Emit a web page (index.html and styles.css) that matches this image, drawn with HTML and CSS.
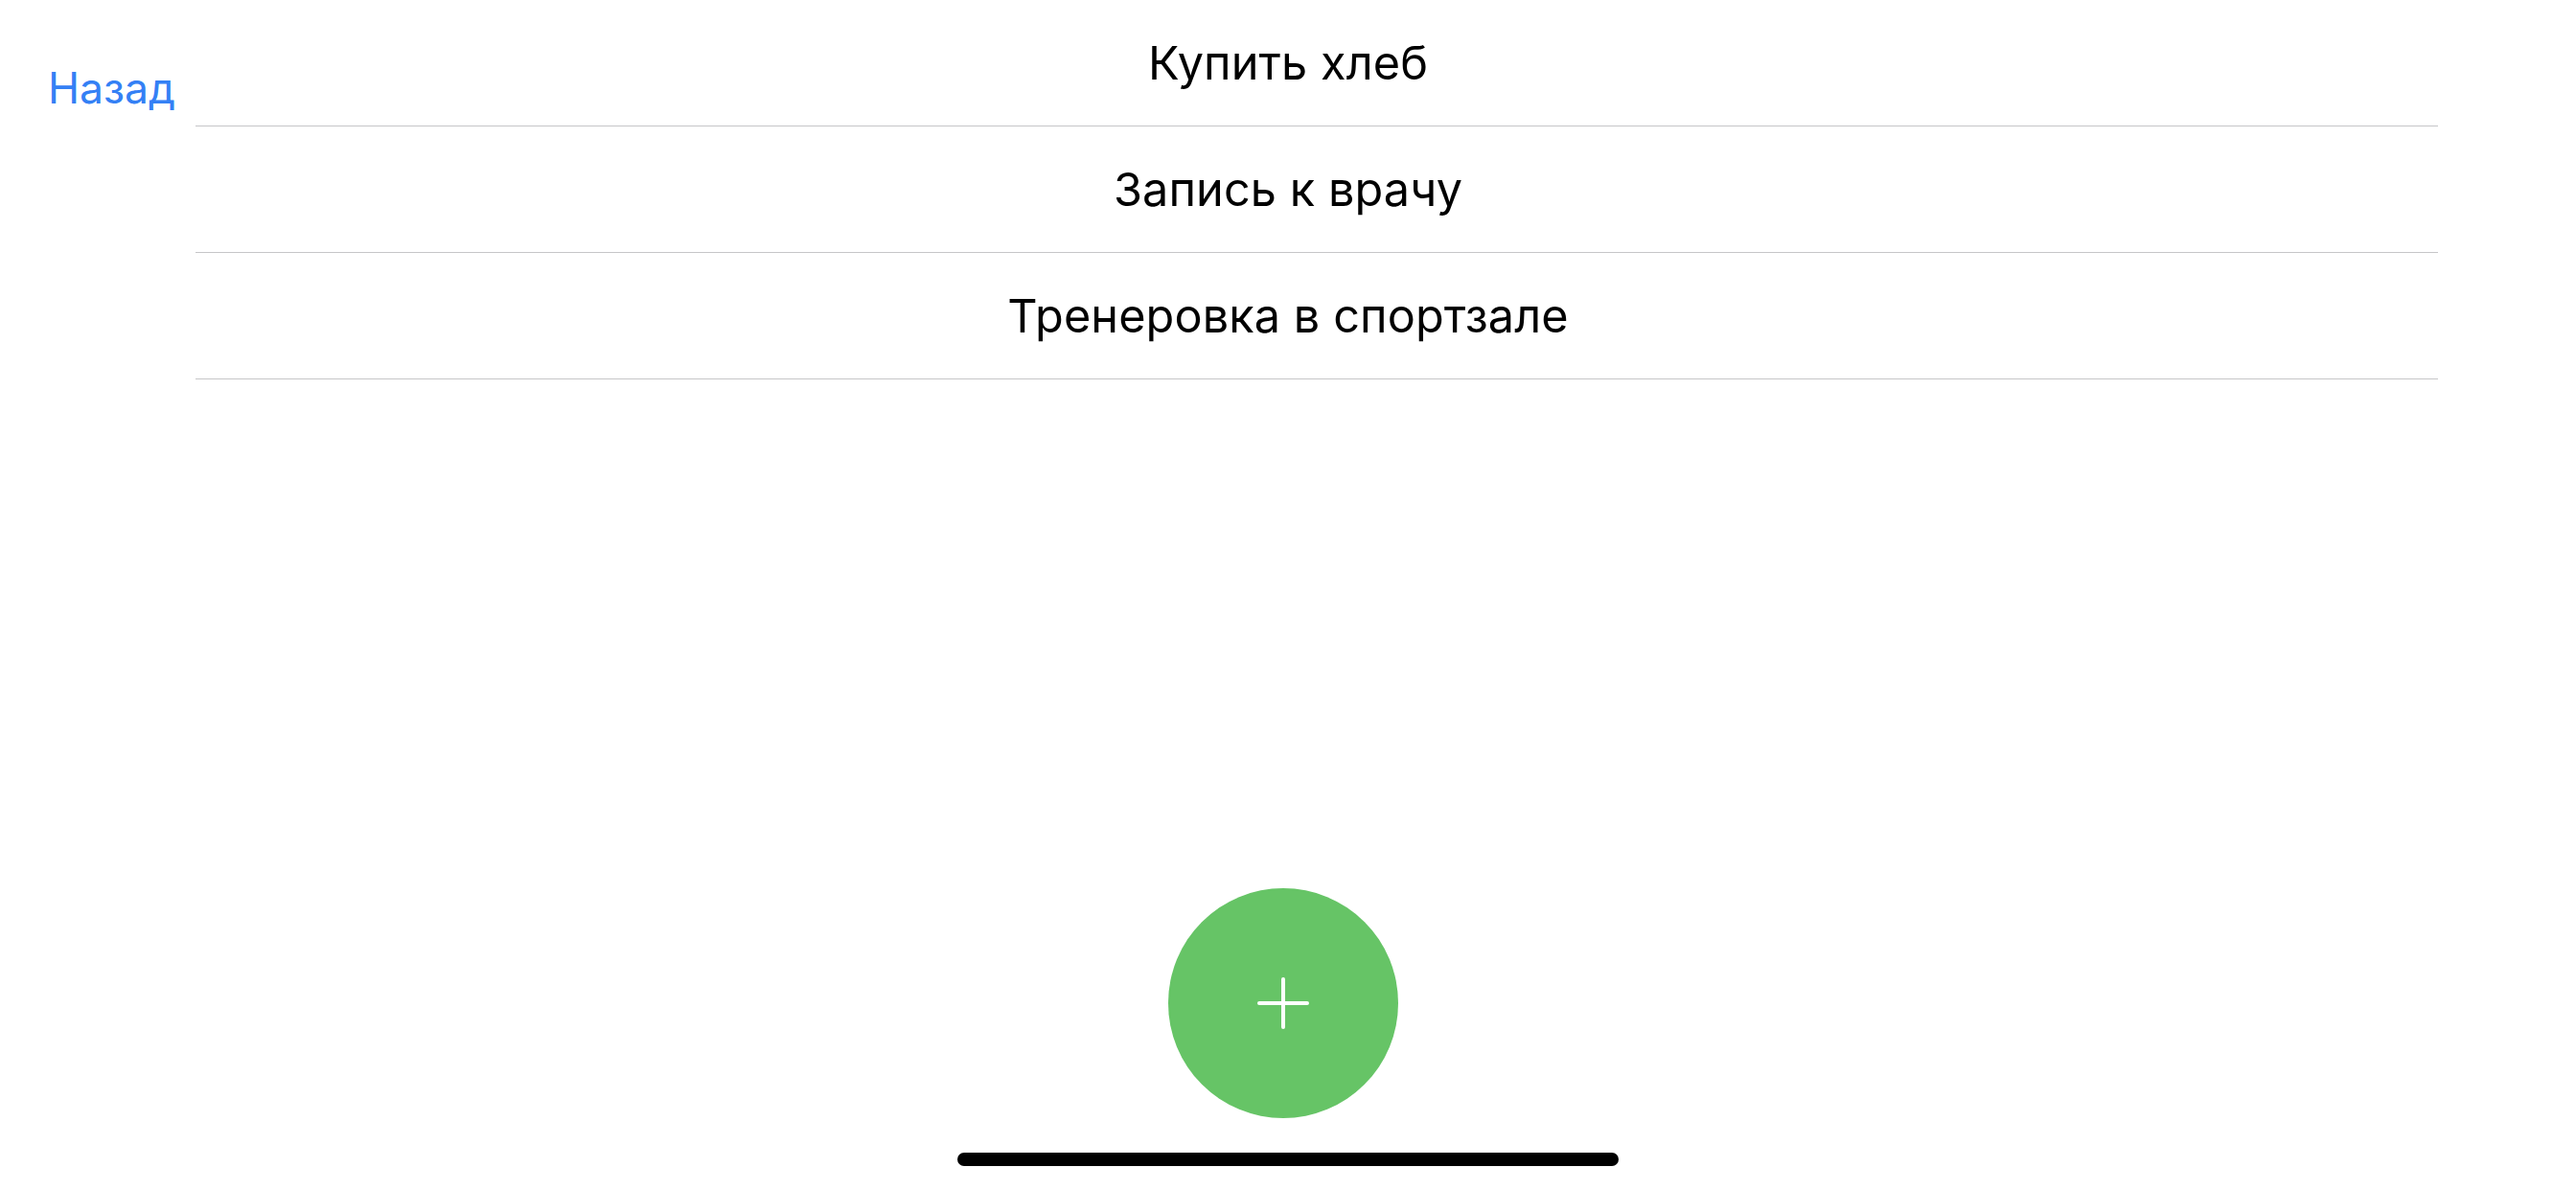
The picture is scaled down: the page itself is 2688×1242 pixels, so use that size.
FILE: index.html
```html
<!DOCTYPE html>
<html lang="ru">
<head>
<meta charset="utf-8">
<title>Список дел</title>
<link rel="stylesheet" href="styles.css">
</head>
<body>
<div class="screen">
  <a class="back" href="#">Назад</a>
  <ul class="list">
    <li class="row"><span class="row-text">Купить хлеб</span></li>
    <li class="row"><span class="row-text">Запись к врачу</span></li>
    <li class="row"><span class="row-text">Тренеровка в спортзале</span></li>
  </ul>
  <div class="spacer"></div>
  <div class="fab-wrap">
    <button class="fab" type="button" aria-label="Добавить">
      <svg width="56" height="56" viewBox="0 0 56 56">
        <path d="M28 3 V53 M3 28 H53" stroke="#fff" stroke-width="4" stroke-linecap="round" fill="none"/>
      </svg>
    </button>
  </div>
  <div class="home-wrap"><div class="home-indicator"></div></div>
</div>
</body>
</html>
```

FILE: styles.css
```css
html, body {
  margin: 0;
  padding: 0;
  background: #ffffff;
}
body {
  font-family: Inter, "Noto Sans", "Liberation Sans", sans-serif;
  color: #000;
}
.screen {
  position: relative;
  height: 1242px;
  display: flex;
  flex-direction: column;
  overflow: hidden;
}
.back {
  position: absolute;
  left: 50px;
  top: 64px;
  font-size: 44.5px;
  line-height: 56px;
  color: #3480f5;
  text-decoration: none;
}
.list {
  list-style: none;
  margin: 0;
  padding: 0 0 1px 0;
}
.row {
  height: 131px;
  display: flex;
  align-items: center;
  justify-content: center;
  position: relative;
}
.row::after {
  content: "";
  position: absolute;
  left: 204px;
  right: 144px;
  bottom: -1px;
  height: 1px;
  background: #c6c6c8;
}
.row + .row {
  margin-top: 1px;
}
.row-text {
  font-size: 48.6px;
  letter-spacing: 0.1px;
}
.spacer {
  flex: 1;
}
.fab-wrap {
  display: flex;
  justify-content: center;
  padding-right: 10px;
}
.fab {
  width: 240px;
  height: 240px;
  border-radius: 50%;
  border: none;
  padding: 0;
  background: #66c466;
  display: flex;
  align-items: center;
  justify-content: center;
}
.fab svg {
  display: block;
}
.home-wrap {
  display: flex;
  justify-content: center;
  padding-top: 36px;
  padding-bottom: 25px;
}
.home-indicator {
  width: 690px;
  height: 14px;
  border-radius: 7px;
  background: #000;
}
```
